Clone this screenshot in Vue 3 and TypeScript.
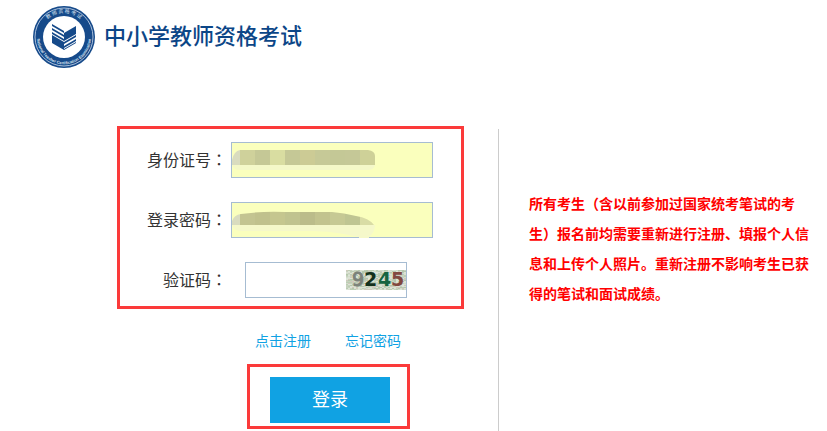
<script setup lang="ts">
import { ref } from 'vue'

const idNumber = ref('')
const password = ref('')
const captcha = ref('')

const idTiles = ['#cfd19b', '#c5c896', '#d9dda1', '#c5c896', '#cccb95', '#c6c997', '#c4c896', '#c5c897', '#ced198', '#ced59f']
const passwordTiles = ['#c3c491', '#c0c18d', '#c5c68f', '#c0c38f', '#bbbc8a', '#c2c38e', '#c6c994', '#bfc592', '#d9dca5', '#d9dca5']

// Seeded grain behind the verification digits
const shades = ['#bccdb4', '#d3dccb', '#b5c7ad', '#dbe1d3', '#c7d3be', '#cfc9bb', '#dde4d7']
const grain: { x: number; y: number; fill: string }[] = []
let seed = 17
for (let y = 0; y < 20; y += 1) {
  for (let x = 0; x < 60; x += 2) {
    seed = (Math.imul(seed, 1664525) + 1013904223) >>> 0
    grain.push({ x, y, fill: shades[(seed >>> 16) % shades.length] })
  }
}
</script>

<template>
  <div class="page">
    <header class="header">
      <svg class="logo" viewBox="0 0 62 62" aria-hidden="true">
        <defs>
          <path id="arc-top" d="M7 31a24 24 0 0 1 48 0" />
          <path id="arc-bottom" d="M5 24a27 27 0 1 0 52 0" />
        </defs>
        <circle cx="31" cy="31" r="31" fill="#164a8a" />
        <circle cx="31" cy="31" r="29" fill="none" stroke="#a9bfdb" stroke-width="1" />
        <circle cx="31" cy="31" r="21" fill="#fff" />
        <text class="logo-cn"><textPath href="#arc-top" startOffset="50%" text-anchor="middle">教 师 资 格 考 试</textPath></text>
        <text class="logo-en"><textPath href="#arc-bottom" startOffset="50%" text-anchor="middle">National Teacher Certification Examination</textPath></text>
        <g fill="#164a8a">
          <path d="M31 27L43 20V28L31 35z" />
          <path d="M19 29L31 36V44L19 37z" />
          <path d="M19 18L31 25V27L19 20zM19 22L31 29V31L19 24zM19 26L31 33V35L19 28z" />
          <path d="M43 29L31 36V38L43 31zM43 33L31 40V42L43 35zM43 36L31 43V44L43 37z" />
        </g>
      </svg>
      <h1>中小学教师资格考试</h1>
    </header>

    <main class="content">
      <form class="login" @submit.prevent>
        <div class="fields">
          <div class="row">
            <label for="id-number">身份证号<span class="colon">：</span></label>
            <div class="field filled">
              <input id="id-number" v-model="idNumber" type="text" />
              <svg class="mask" viewBox="0 0 146 36" aria-hidden="true">
                <clipPath id="id-top"><path d="M0 23V18Q2 9 8 8H136Q143 9 143 14V23z" /></clipPath>
                <path d="M0 23H143Q142 28 136 28H8Q2 28 0 23z" fill="#f4f8c8" />
                <g clip-path="url(#id-top)">
                  <rect width="9" height="36" fill="#d9dcbf" />
                  <rect v-for="(fill, i) in idTiles" :key="i" :x="8 + i * 15" width="15" height="36" :fill="fill" />
                </g>
              </svg>
            </div>
          </div>
          <div class="row">
            <label for="password">登录密码<span class="colon">：</span></label>
            <div class="field filled">
              <input id="password" v-model="password" type="password" />
              <svg class="mask" viewBox="0 0 146 36" aria-hidden="true">
                <clipPath id="password-top"><path d="M0 23V19Q2 13 9 12Q30 9 53 10H100Q112 11 124 14Q137 16 142 23z" /></clipPath>
                <path d="M0 23H143Q143 30 137 35V36H127V35L112 32Q96 29 80 29H10Q2 29 0 23z" fill="#f5f8ca" />
                <g clip-path="url(#password-top)">
                  <rect width="9" height="36" fill="#d9dcbf" />
                  <rect v-for="(fill, i) in passwordTiles" :key="i" :x="8 + i * 15" width="15" height="36" :fill="fill" />
                </g>
              </svg>
            </div>
          </div>
          <div class="row">
            <label for="captcha">验证码<span class="colon">：</span></label>
            <div class="field code">
              <input id="captcha" v-model="captcha" type="text" />
              <svg class="code-image" viewBox="0 0 60 20" role="img" aria-label="9245">
                <rect v-for="(g, i) in grain" :key="i" :x="g.x" :y="g.y" width="2" height="1" :fill="g.fill" />
                <text class="thin" x="6" y="16" fill="#7c827a">9</text>
                <text x="18" y="16" fill="#14311c">2</text>
                <text x="32" y="16" fill="#176440">4</text>
                <text x="45" y="16" fill="#82483f">5</text>
              </svg>
            </div>
          </div>
        </div>

        <nav class="links">
          <a href="#register">点击注册</a>
          <a href="#forgot">忘记密码</a>
        </nav>

        <div class="submit">
          <button type="submit">登录</button>
        </div>
      </form>

      <aside class="notice">
        <p>所有考生（含以前参加过国家统考笔试的考生）报名前均需要重新进行注册、填报个人信息和上传个人照片。重新注册不影响考生已获得的笔试和面试成绩。</p>
      </aside>
    </main>
  </div>
</template>

<style>
body {
  background: #fff;
}
</style>

<style scoped>
.page {
  font-family: "Noto Sans CJK SC", sans-serif;
  color: #333;
}

.header {
  display: flex;
  align-items: flex-start;
  gap: 9px;
  padding: 6px 33px 0;
}

.logo {
  width: 62px;
  height: 62px;
}

.logo text {
  fill: #dce6f2;
}

.logo-cn {
  font-size: 5px;
}

.logo-en {
  font: bold 4px "Liberation Sans", sans-serif;
}

h1 {
  margin: 0;
  padding-top: 12px;
  font-size: 22px;
  line-height: 32px;
  font-weight: 500;
  color: #0c4687;
}

.content {
  display: flex;
  align-items: stretch;
  padding: 58px 16px 0 117px;
}

.login {
  flex: none;
  padding-right: 34px;
}

.fields {
  display: flex;
  flex-direction: column;
  gap: 24px;
  padding: 13px 28px 8px 27px;
  border: 3px solid #fb3a3a;
}

.row {
  display: flex;
  align-items: flex-start;
  gap: 4px;
}

label {
  width: 80px;
  font-size: 16px;
  line-height: 34px;
  text-align: right;
  white-space: nowrap;
}

.colon {
  font-family: "Noto Sans CJK TC", sans-serif;
}

.field {
  position: relative;
  display: flex;
  align-items: center;
  box-sizing: border-box;
  width: 202px;
  height: 36px;
  border: 1px solid #a6bcd2;
}

.filled {
  background: #faffbd;
}

.code {
  width: 162px;
  margin-left: 14px;
}

input {
  flex: 1;
  min-width: 0;
  height: 34px;
  box-sizing: border-box;
  padding: 0 8px;
  border: 0;
  outline: 0;
  background: transparent;
  font: 16px "Noto Sans CJK SC", sans-serif;
}

.mask {
  position: absolute;
  top: -1px;
  left: 0;
  width: 146px;
  height: 36px;
  pointer-events: none;
}

.code-image {
  flex: none;
  width: 60px;
  height: 20px;
  overflow: visible;
}

.code-image text {
  font: bold 19px "DejaVu Sans", sans-serif;
}

.code-image .thin {
  font-weight: 400;
  stroke: #7c827a;
  stroke-width: 1px;
}

.links {
  display: flex;
  gap: 34px;
  padding: 19px 0 12px 138px;
  font-size: 14px;
  line-height: 24px;
}

a {
  color: #10a2e3;
  text-decoration: none;
}

.submit {
  width: fit-content;
  margin-left: 130px;
  padding: 10px 17px 3px 20px;
  border: 3px solid #fb3a3a;
}

button {
  display: block;
  width: 120px;
  height: 46px;
  padding: 0 0 4px;
  border: 0;
  background: #10a2e3;
  color: #fff;
  font: 18px "Noto Sans CJK SC", sans-serif;
}

.notice {
  flex: 1;
  margin-top: 3px;
  padding: 59px 0 0 30px;
  min-height: 243px;
  border-left: 1px solid #ccc;
}

.notice p {
  margin: 0;
  font-size: 14px;
  line-height: 30px;
  font-weight: 700;
  color: #f00;
}
</style>
